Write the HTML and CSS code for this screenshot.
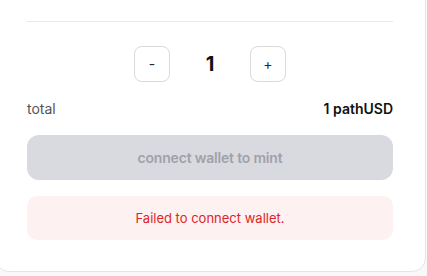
FILE: index.html
```html
<!DOCTYPE html>
<html>
<head>
<meta charset="utf-8">
<link rel="stylesheet" href="styles.css">
</head>
<body>
<div class="card">
  <div class="divider"></div>
  <div class="stepper">
    <button class="step-btn">-</button>
    <span class="qty">1</span>
    <button class="step-btn">+</button>
  </div>
  <div class="total-row">
    <span class="total-label">total</span>
    <span class="total-value">1 pathUSD</span>
  </div>
  <button class="mint-btn" disabled>connect wallet to mint</button>
  <div class="error">Failed to connect wallet.</div>
</div>
</body>
</html>
```
FILE: styles.css
```css
html, body {
  margin: 0;
  padding: 0;
  background: #f8f8f8;
  font-family: Inter, "Noto Sans", sans-serif;
  overflow: hidden;
}
.card {
  box-sizing: border-box;
  width: 431px;
  margin: -12px 0 0 -5px;
  padding: 32px 32px 31px 31px;
  background: #fff;
  border: 1px solid #e4e4e7;
  border-radius: 0 0 14px 14px;
  display: flex;
  flex-direction: column;
}
.divider {
  height: 1px;
  background: #e8e8eb;
}
.stepper {
  margin-top: 24px;
  display: flex;
  justify-content: center;
  align-items: center;
  gap: 16px;
}
.step-btn {
  box-sizing: border-box;
  width: 36px;
  height: 36px;
  border: 1px solid #d9d9de;
  border-radius: 8px;
  background: #fff;
  color: #27272a;
  font-family: inherit;
  font-size: 14px;
  padding: 0;
  line-height: 1;
}
.qty {
  width: 48px;
  text-align: center;
  font-size: 20px;
  font-weight: 700;
  color: #111;
}
.total-row {
  margin-top: 16px;
  display: flex;
  justify-content: space-between;
  align-items: center;
  height: 20px;
  font-size: 14px;
}
.total-label {
  color: #52525b;
}
.total-value {
  font-weight: 600;
  color: #111;
}
.mint-btn {
  margin-top: 17px;
  height: 45px;
  border: none;
  border-radius: 12px;
  background: #d9dadf;
  color: #a1a1aa;
  font-family: inherit;
  font-size: 14px;
  font-weight: 600;
  letter-spacing: -0.2px;
}
.error {
  margin-top: 16px;
  height: 44px;
  display: flex;
  align-items: center;
  justify-content: center;
  background: #fef1f2;
  border-radius: 10px;
  color: #dc2626;
  font-size: 13px;
}
```
